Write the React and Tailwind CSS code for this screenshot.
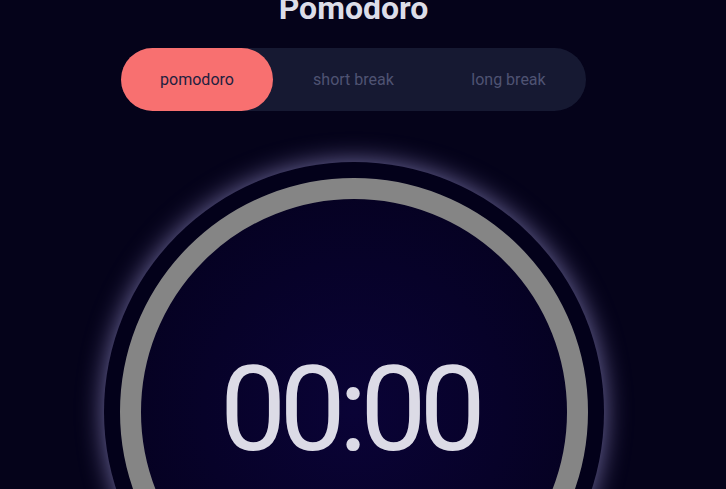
import { useState } from 'react';

export default function App() {
  const [mode, setMode] = useState('pomodoro');

  const tabs = [
    { id: 'pomodoro', label: 'pomodoro' },
    { id: 'short', label: 'short break' },
    { id: 'long', label: 'long break' },
  ];

  return (
    <div className="min-h-screen w-full overflow-hidden bg-[#05031a] font-['Roboto',sans-serif]">
      <div className="flex flex-col items-center pr-[19px]">
        {/* Title */}
        <h1 className="-mt-[11px] text-[32px] leading-[38px] font-bold text-[#dcdde8]">Pomodoro</h1>

        {/* Mode switcher */}
        <div className="mt-[21px] flex h-[63px] w-[465px] rounded-full bg-[#161932]">
          {tabs.map((t) => (
            <button
              key={t.id}
              onClick={() => setMode(t.id)}
              className={`h-full rounded-full text-[16px] ${
                mode === t.id ? 'mr-[3px] w-[152px] bg-[#f87070] text-[#1e213f]' : 'w-[155px] text-[#4f5372]'
              }`}
            >
              {t.label}
            </button>
          ))}
        </div>

        {/* Timer dial */}
        <div className="mt-[51px] flex h-[500px] w-[500px] shrink-0 items-center justify-center rounded-full bg-[#03011a] shadow-[0_0_26px_rgba(190,180,255,0.6)]">
          <div className="flex h-[468px] w-[468px] items-center justify-center rounded-full border-[21px] border-[#858585] bg-[radial-gradient(circle_at_center,#0a0336_0%,#070229_50%,#04011b_100%)]">
            <span className="-ml-[8px] -mt-[4px] text-[118px] font-normal tracking-[-7px] text-[#dcdbe6]">00:00</span>
          </div>
        </div>
      </div>
    </div>
  );
}
